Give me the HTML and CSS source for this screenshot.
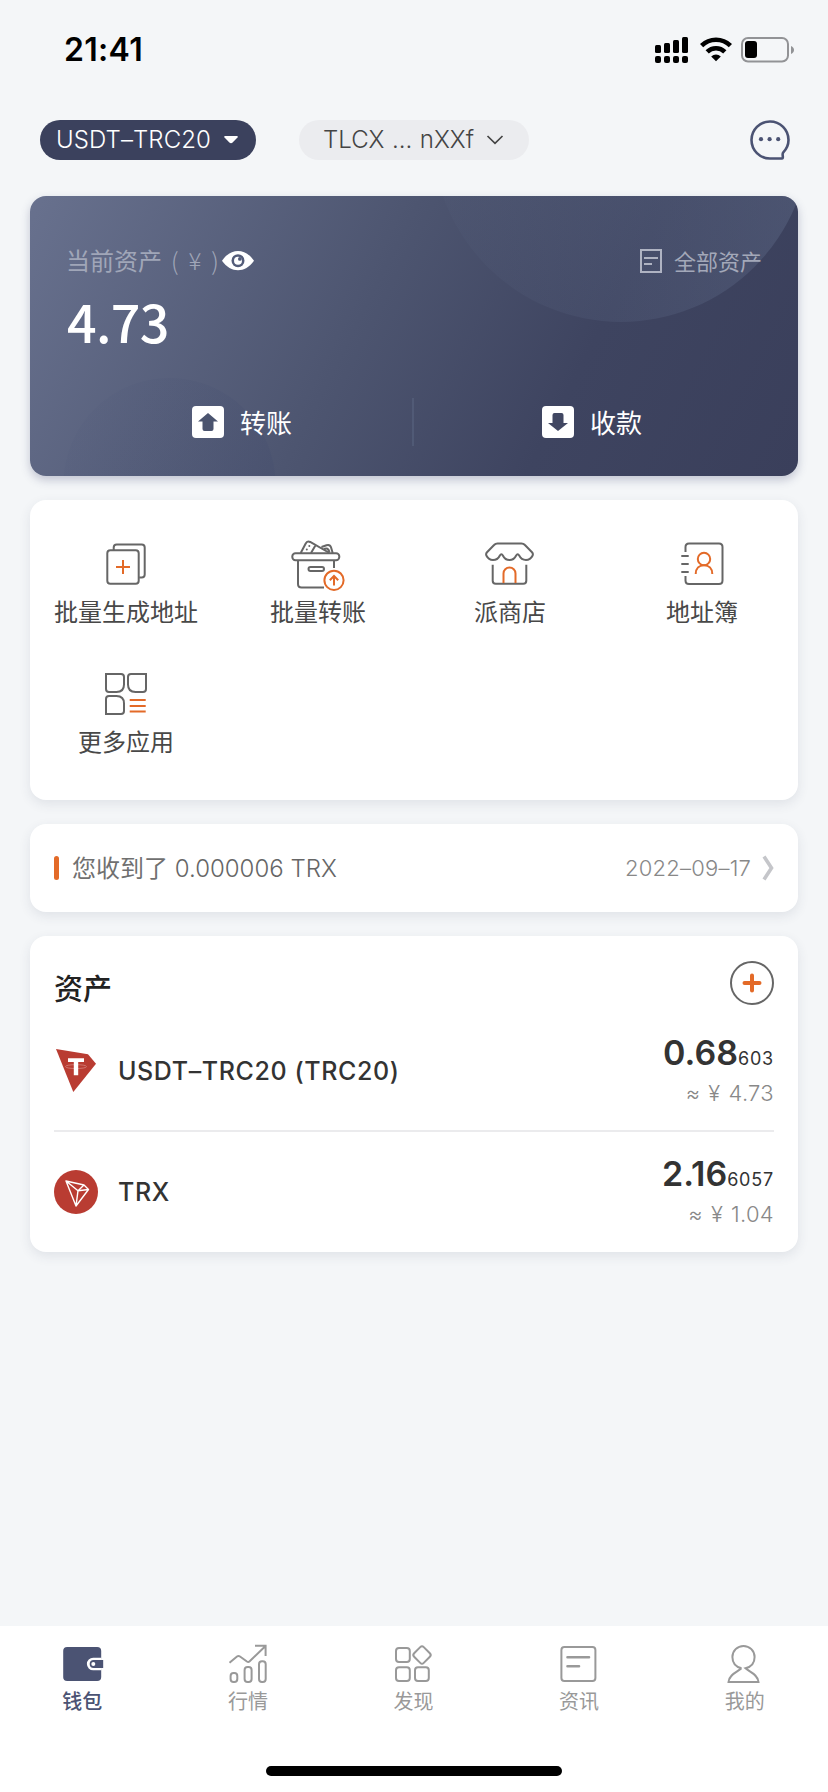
FILE: index.html
```html
<!DOCTYPE html>
<html lang="zh-CN">
<head>
<meta charset="utf-8">
<title>钱包</title>
<link rel="stylesheet" href="styles.css">
</head>
<body>
<div class="app">
  <header class="status">
    <span class="time">21:41</span>
    <div class="status-icons">
      <svg width="33" height="26" viewBox="0 0 33 26"><rect x="0" y="8" width="6" height="8" rx="1.5"/><rect x="9" y="6" width="6" height="10" rx="1.5"/><rect x="18" y="3" width="6" height="13" rx="1.5"/><rect x="27" y="0" width="6" height="16" rx="1.5"/><rect x="0" y="19" width="6" height="7" rx="2"/><rect x="9" y="19" width="6" height="7" rx="2"/><rect x="18" y="19" width="6" height="7" rx="2"/><rect x="27" y="19" width="6" height="7" rx="2"/></svg>
      <svg class="wifi" width="32" height="26" viewBox="0 0 32 26"><path d="M1.6 8.6A20.5 20.5 0 0 1 30.4 8.6" fill="none" stroke="#000" stroke-width="4.6"/><path d="M7.2 14.8A12.6 12.6 0 0 1 24.8 14.8" fill="none" stroke="#000" stroke-width="4.6"/><path d="M11.2 19.4a7 7 0 0 1 9.6 0L16 24.2z"/></svg>
      <svg class="battery" width="54" height="26" viewBox="0 0 54 26"><rect x="1" y="1" width="46" height="23.5" rx="6" fill="none" stroke="#929396" stroke-width="2"/><rect x="4" y="4" width="12" height="17" rx="3"/><path d="M50 9c4 1.500 4 6.500 0 8z" fill="#929396"/></svg>
    </div>
  </header>

  <nav class="top">
    <div class="pill dark"><span class="pill-chain">USDT–TRC20</span><svg width="16" height="10" viewBox="0 0 16 10"><path d="M2 1h12q1.500.3.500 1.600L9.600 7.600q-1.600 1.400-3.200 0L1.500 2.600Q.5 1.300 2 1z" fill="#fff"/></svg></div>
    <div class="pill light"><span class="pill-addr">TLCX ... nXXf</span><svg width="18" height="12" viewBox="0 0 18 12"><path d="M1.500 2 9 9.300 16.500 2" fill="none" stroke="#444" stroke-width="1.700"/></svg></div>
    <svg class="chat" width="40" height="40" viewBox="0 0 40 40"><path d="M31.800 38.500H20A18.500 18.500 0 1 1 38.500 20c0 5-2 9-5.200 12.300-1.100 1.100-.6 2.500-.5 4.200.1 1.400 0 2-1 2z" fill="none" stroke="#4b5373" stroke-width="2.600"/><g fill="#4b5373"><circle cx="11" cy="19.200" r="2.100"/><circle cx="19.600" cy="19.200" r="2.100"/><circle cx="28.200" cy="19.200" r="2.100"/></g></svg>
  </nav>

  <section class="balance">
    <svg class="orbs" width="768" height="280" viewBox="0 0 768 280">
      <defs>
        <linearGradient id="orb-top" gradientUnits="userSpaceOnUse" x1="420" y1="80" x2="760" y2="0"><stop offset="0" stop-color="#6e7d9b" stop-opacity=".04"/><stop offset="1" stop-color="#6e7d9b" stop-opacity=".3"/></linearGradient>
        <linearGradient id="orb-low" gradientUnits="userSpaceOnUse" x1="60" y1="190" x2="230" y2="280"><stop offset="0" stop-color="#38436a" stop-opacity=".04"/><stop offset="1" stop-color="#38436a" stop-opacity=".14"/></linearGradient>
      </defs>
      <circle cx="591" cy="-63" r="189" fill="url(#orb-top)"/><circle cx="139.500" cy="288" r="106" fill="url(#orb-low)"/>
    </svg>
    <div class="balance-head">
      <div class="label"><span>当前资产</span><span class="paren">( ¥ )</span><svg width="32" height="20" viewBox="0 0 32 20"><path d="M0 9.700C9-3.200 23-3.200 32 9.700 23 22.400 9 22.400 0 9.700z" fill="#fff"/><circle cx="16" cy="9.700" r="6.500" fill="#535c79"/><circle cx="16" cy="9.700" r="4" fill="#fff"/><circle cx="17.900" cy="7.900" r="1.900" fill="#535c79"/></svg></div>
      <div class="all"><svg width="22" height="24" viewBox="0 0 22 24"><path d="M1 1h20v22H1zM4 9h14M4 15h8" fill="none" stroke="#afb3c2" stroke-width="2"/></svg><span>全部资产</span></div>
    </div>
    <div class="amount">4.73</div>
    <div class="actions">
      <div class="action send"><svg width="32" height="32" viewBox="0 0 32 32"><rect width="32" height="32" rx="4" fill="#fff"/><path d="M16 7l10 8.500h-4.500V23q0 2-2 2h-7q-2 0-2-2v-7.500H6z" fill="#4b546f"/></svg><span>转账</span></div>
      <div class="action receive"><svg width="32" height="32" viewBox="0 0 32 32"><rect width="32" height="32" rx="4" fill="#fff"/><path d="M16 25L6 17h4.500V9q0-2 2-2h7q2 0 2 2v8H26z" fill="#414762"/></svg><span>收款</span></div>
    </div>
  </section>

  <section class="card grid">
    <div class="cell"><svg width="56" height="56" viewBox="0 0 56 56"><g fill="none" stroke="#666" stroke-width="2"><rect x="9.300" y="14.300" width="31.400" height="33.400" rx="3"/><path d="M15.700 14V11.500q0-3 3-3h25q3 0 3 3v27q0 3-3 3h-2.500"/></g><path d="M18 31h14M25 24v14" stroke="#e36a28" stroke-width="2"/></svg><span>批量生成地址</span></div>
    <div class="cell"><svg width="56" height="56" viewBox="0 0 56 56"><g fill="none" stroke="#666" stroke-width="2"><rect x="2.300" y="17.300" width="47" height="7" rx="3.200"/><path d="M8 25v23q0 3.500 3.500 3.500H34M44 25v7"/><rect x="18.500" y="31" width="15.500" height="4" rx="2"/><path d="M10.700 17l5-9.500q1.500-3 4.500-1.500L39.500 17M26 8.500 21 17M31.500 11l5-1.800q3.500-1 4.500 2L42.700 17M34 13q4-2 5.500 3"/></g><g fill="#666"><circle cx="16.800" cy="13.500" r="1"/><circle cx="19.300" cy="10" r="1"/></g><path d="M44 49.500V40.500M39.800 44.300 44 40l4.200 4.300" fill="none" stroke="#e36a28" stroke-width="2"/><circle cx="44" cy="44.300" r="9.600" fill="none" stroke="#e36a28" stroke-width="2"/></svg><span>批量转账</span></div>
    <div class="cell"><svg width="56" height="56" viewBox="0 0 56 56"><g fill="none" stroke="#666" stroke-width="2"><path d="M15.500 7.500h24q2 0 3.200 1.300L50 16.200q1.500 1.600.5 3.600c-1.500 3-4 4.200-6.500 4.200-3.500 0-5.600-1.800-6.700-4.300q-1.600-3-3.300 0c-1.300 2.600-3.500 4.300-6.500 4.300s-5.200-1.700-6.500-4.300q-1.600-3-3.300 0C16.500 22.200 14.500 24 11 24c-2.500 0-5-1.200-6.500-4.200q-1-2 .5-3.600l7.300-7.400q1.200-1.300 3.200-1.300z"/><path d="M10.700 28.700v16q0 3 3 3h27.600q3 0 3-3v-16"/></g><path d="M21.500 47V37.500a6 6 0 0 1 12 0V47" fill="none" stroke="#e36a28" stroke-width="2"/></svg><span>派商店</span></div>
    <div class="cell"><svg width="56" height="56" viewBox="0 0 56 56"><path d="M11.500 16V11q0-3.500 3.500-3.500h30q3.500 0 3.500 3.500v33.500q0 3.500-3.500 3.500H15q-3.500 0-3.500-3.500V40M7.300 20h7.400M7.300 28h7.400M7.300 36h7.400" fill="none" stroke="#666" stroke-width="2"/><g fill="none" stroke="#e36a28" stroke-width="2"><circle cx="30" cy="23" r="6.200"/><path d="M21.700 38c0-5.500 3.500-8.800 8.300-8.800s8.300 3.300 8.300 8.800"/></g></svg><span>地址簿</span></div>
    <div class="cell"><svg width="56" height="56" viewBox="0 0 56 56"><g fill="none" stroke="#666" stroke-width="2"><path d="M8 8h15q3 0 3 3v7.500q0 7.500-7.500 7.500H11q-3 0-3-3zM48 8H33q-3 0-3 3v7.500q0 7.500 7.500 7.500H45q3 0 3-3zM8 48V33q0-3 3-3h7.500Q26 30 26 37.500V45q0 3-3 3z"/></g><path d="M31.700 34h16M31.700 40h16M31.700 45.500h16" stroke="#e36a28" stroke-width="2"/></svg><span>更多应用</span></div>
  </section>

  <section class="card notice">
    <i class="mark"></i><span class="msg">您收到了 <span class="msg-latin">0.000006 TRX</span></span><span class="date">2022–09–17</span>
    <svg width="12" height="26" viewBox="0 0 12 26"><path d="M2 1.500 9.500 13 2 24.500" fill="none" stroke="#c5c6ca" stroke-width="3.600"/></svg>
  </section>

  <section class="card assets">
    <div class="assets-head"><h2>资产</h2><svg width="44" height="44" viewBox="0 0 44 44"><circle cx="22" cy="22" r="21" fill="none" stroke="#666" stroke-width="2"/><path d="M14.500 22h15M22 14.500v15" stroke="#e36a28" stroke-width="4" stroke-linecap="round"/></svg></div>
    <div class="asset">
      <svg width="44" height="44" viewBox="0 0 44 44"><path d="M2 0 34 5.300 42 14.700 19.300 43z" fill="#b93c32"/><path d="M11.500 17.600c0-2.600 21-2.600 21 0s-21 2.600-21 0z" fill="none" stroke="#dd9b95" stroke-width=".6"/><path d="M14 9.300h16v3.600h-5.800v13.400h-4.400V12.900H14z" fill="#fff"/></svg>
      <span class="coin">USDT–TRC20 (TRC20)</span>
      <div class="value"><div class="qty"><b>0.68</b><small>603</small></div><div class="fiat">≈ ¥ 4.73</div></div>
    </div>
    <div class="asset">
      <svg width="44" height="44" viewBox="0 0 44 44"><circle cx="22" cy="22" r="22" fill="#b93c32"/><path d="M12 11 30 15l4.500 4.500L22 36zM12 11l12 9.700L30 15M24 20.700l10.500-1.200M24 20.700 22 36" fill="none" stroke="#fff" stroke-width="1.400" stroke-linejoin="round"/></svg>
      <span class="coin">TRX</span>
      <div class="value"><div class="qty"><b>2.16</b><small>6057</small></div><div class="fiat">≈ ¥ 1.04</div></div>
    </div>
  </section>

  <footer class="tabbar">
    <div class="tabs">
      <div class="tab active"><svg width="44" height="46" viewBox="0 0 44 46"><rect x="2.200" y="7" width="38" height="34" rx="4" fill="#4b5373"/><path d="M40.500 18.700H32.200a5 5 0 0 0 0 10.600h8.300" fill="#fff" stroke="#fff" stroke-width="2"/><path d="M42.200 20v8h-9.500a4 4 0 0 1 0-8z" fill="#4b5373"/><circle cx="32.300" cy="24" r="2" fill="#fff"/></svg><span>钱包</span></div>
      <div class="tab"><svg width="44" height="46" viewBox="0 0 44 46"><path d="M3.500 22.700l7.500-6.200q1.500-1.100 3 0l6.900 5q1.500 1 2.800-.2L39 6.500M29 5.800h10.600V16" fill="none" stroke="#999" stroke-width="2"/><g fill="none" stroke="#999" stroke-width="2"><rect x="4.600" y="33" width="6.700" height="9" rx="3"/><rect x="18.600" y="27" width="7" height="15" rx="3"/><rect x="33" y="21.300" width="6.700" height="20.700" rx="3"/></g></svg><span>行情</span></div>
      <div class="tab"><svg width="44" height="46" viewBox="0 0 44 46"><g fill="none" stroke="#999" stroke-width="2"><rect x="4" y="8" width="13.800" height="14" rx="3"/><rect x="4" y="27.300" width="13.800" height="13.800" rx="3"/><rect x="23" y="27.300" width="13.800" height="13.800" rx="3"/><rect x="23.200" y="8.200" width="13.600" height="13.600" rx="2.500" transform="rotate(45 30 15)"/></g></svg><span>发现</span></div>
      <div class="tab"><svg width="44" height="46" viewBox="0 0 44 46"><rect x="3.400" y="7" width="34" height="34" rx="3" fill="none" stroke="#999" stroke-width="2"/><path d="M9.500 17.300h21.500M9.500 26.300H21" stroke="#999" stroke-width="2.600" stroke-linecap="round"/></svg><span>资讯</span></div>
      <div class="tab"><svg width="44" height="46" viewBox="0 0 44 46"><path d="M18.500 28.300C11.500 26.500 9.400 21.500 9.400 17a11.100 11.100 0 0 1 22.200 0c0 4.500-2.100 9.500-9.100 11.300 4 3.500 12.500 6 13 13.700h-30c.5-7.700 9-10.200 13-13.700" fill="none" stroke="#999" stroke-width="2"/></svg><span>我的</span></div>
    </div>
    <div class="home"></div>
  </footer>
</div>
</body>
</html>
```
FILE: styles.css
```css
* { box-sizing: border-box; margin: 0; padding: 0; }
body { background: #f4f6f8; font-family: Inter, "Noto Sans CJK SC", sans-serif; color: #333; }
svg { display: block; flex: none; }
span, .amount, .fiat, .qty { white-space: nowrap; }
.app { width: 828px; height: 1792px; display: flex; flex-direction: column; overflow: hidden; }

.status { height: 98px; padding: 0 34px 0 64px; display: flex; justify-content: space-between; align-items: center; }
.time { font-size: 32px; font-weight: 600; color: #000; letter-spacing: 0.3px; line-height: 40px; padding-top: 2px; }
.status-icons { display: flex; align-items: center; padding-top: 2px; }
.wifi { margin-left: 12px; }
.battery { margin-left: 9px; margin-right: -1px; }

.top { height: 84px; padding: 0 38px 0 40px; display: flex; align-items: center; }
.pill { height: 40px; border-radius: 20px; display: flex; align-items: center; line-height: 40px; font-size: 24px; font-weight: 300; }
.dark { width: 216px; padding: 0 17px 0 16px; background: #3b415d; color: #fff; justify-content: space-between; }
.light { width: 230px; margin-left: 43px; padding: 0 25px 0 24px; background: #ebecef; color: #444; justify-content: space-between; }
.pill-chain { letter-spacing: 0.1px; }
.pill-addr { word-spacing: 0.8px; }
.chat { margin-left: auto; }

.balance { position: relative; margin: 14px 30px 0; height: 280px; flex: none; border-radius: 16px;
  background: linear-gradient(117deg, #68718e 0%, #4d5570 43%, #3e4460 70%, #3a3f5b 100%);
  box-shadow: 0 4px 10px rgba(60, 70, 110, .28); }
.orbs { position: absolute; inset: 0; border-radius: 16px; overflow: hidden; }
.balance-head, .amount, .actions { position: relative; }
.balance-head { display: flex; justify-content: space-between; padding: 44px 36px 0 36px; height: 84px; }
.label { display: flex; align-items: center; height: 40px; font-size: 24px; color: #a0a6b8; }
.label > span { margin-top: -2px; }
.paren { font-family: "Noto Sans CJK SC", sans-serif; width: 60px; padding-left: 9px; letter-spacing: 2.300px; white-space: pre; font-weight: 300; }
.label svg { margin-top: 2px; }
.all { display: flex; align-items: center; height: 40px; gap: 12px; font-size: 22px; color: #a3a8b9; }
.all svg { margin-top: 2px; }
.all span { margin-top: -1px; }
.amount { padding-left: 37px; font: 500 52px/82px "Noto Sans CJK SC", sans-serif; color: #fff; letter-spacing: -0.7px; }
.actions { display: flex; margin-top: 36px; height: 48px; align-items: center; }
.action { display: flex; align-items: center; gap: 16px; width: 384px; height: 48px; color: #fff; font-size: 26px; }
.action span { margin-top: -2px; }
.send { padding-left: 162px; border-right: 2px solid rgba(120, 135, 165, .22); }
.receive { padding-left: 128px; }

.card { margin: 24px 30px 0; flex: none; background: #fff; border-radius: 16px; box-shadow: 0 4px 12px rgba(50, 55, 85, .1); }
.grid { height: 300px; padding-top: 36px; display: grid; grid-template-columns: repeat(4, 192px); grid-auto-rows: 130px; }
.cell { display: flex; flex-direction: column; align-items: center; font-size: 24px; line-height: 42px; color: #484848; }

.notice { height: 88px; padding: 0 24px; display: flex; align-items: center; font-size: 24px; color: #707070; }
.mark { width: 5px; height: 24px; border-radius: 3px; background: #e36a28; }
.msg { margin: -4px 0 0 13px; }
.msg-latin { font-weight: 300; color: #666; }
.date { margin-left: auto; margin-right: 11px; font-size: 22px; font-weight: 300; color: #888; letter-spacing: 0.2px; }

.assets { height: 316px; padding: 0 24px; }
.assets-head { height: 76px; display: flex; justify-content: space-between; padding-top: 25px; }
.assets-head h2 { font-size: 29px; font-weight: 500; line-height: 58px; color: #222; }
.asset { height: 118px; display: flex; align-items: center; }
.asset + .asset { border-top: 2px solid #ebebed; height: 122px; }
.coin { margin-left: 20px; font-size: 25px; font-weight: 500; letter-spacing: 0.6px; }
.value { margin-left: auto; text-align: right; }
.qty { line-height: 38px; }
.qty b { font-size: 34px; font-weight: 600; }
.qty small { font-size: 18px; letter-spacing: 0.8px; }
.fiat { font-size: 22px; font-weight: 300; line-height: 30px; color: #888; letter-spacing: 0.3px; word-spacing: 1.500px; }

.tabbar { margin-top: auto; height: 166px; flex: none; background: #fff; display: flex; flex-direction: column; align-items: center; }
.tabs { display: grid; grid-template-columns: repeat(5, 1fr); width: 828px; padding-top: 14px; }
.tab { display: flex; flex-direction: column; align-items: center; font-size: 20px; line-height: 32px; color: #999; }
.tab span { margin-right: 1px; }
.active { color: #4b5373; font-weight: 500; }
.home { width: 296px; height: 10px; border-radius: 5px; background: #000; margin-top: 48px; }
```
